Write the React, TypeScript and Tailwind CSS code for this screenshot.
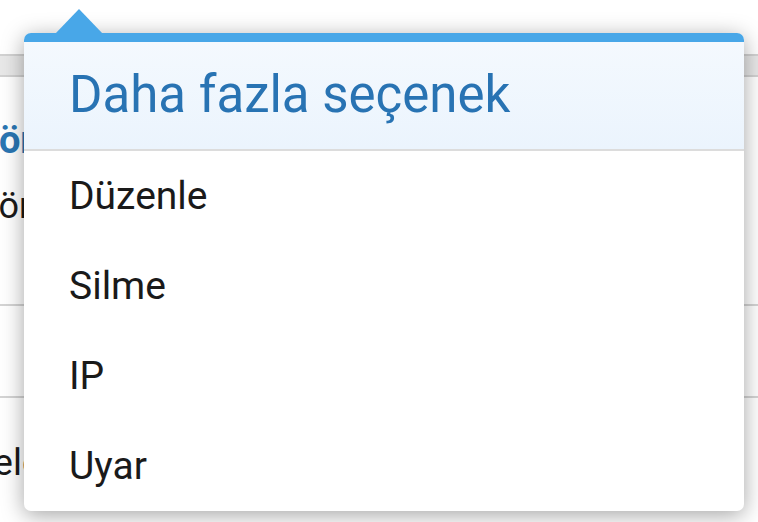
import React from "react";

const items = ["Düzenle", "Silme", "IP", "Uyar"];

export default function App() {
  return (
    <div
      className="relative w-[758px] h-[522px] overflow-hidden bg-white"
      style={{ fontFamily: "Roboto, 'Noto Sans', sans-serif" }}
    >
      {/* background page */}
      <div className="flex flex-col w-full">
        <div className="h-[54px]" />
        <div className="h-[23px] bg-[#e8e8e8] border-y-2 border-[#d2d2d2]" />
        <div className="h-[227px] flex flex-col pt-[40px] gap-[21px] overflow-hidden">
          <div className="ml-[-27px] text-[38px] leading-[46px] font-bold text-[#2a76b3] whitespace-nowrap">
            Görev
          </div>
          <div className="ml-[-22px] text-[36px] leading-[44px] text-[#1a1a1a] whitespace-nowrap">
            Yönetici
          </div>
        </div>
        <div className="h-[94px] border-y-2 border-[#d4d4d4]" />
        <div className="pt-[43px]">
          <div className="ml-[-27px] text-[37px] leading-[44px] text-[#1a1a1a] whitespace-nowrap">
            Telco
          </div>
        </div>
      </div>

      {/* popover */}
      <div className="absolute left-[24px] top-[33px] w-[720px] h-[478px] rounded-[7px] bg-white shadow-[0_4px_22px_rgba(0,0,0,0.36)] flex flex-col">
        <svg
          className="absolute left-[31px] top-[-24px]"
          width="48"
          height="25"
          viewBox="0 0 48 25"
        >
          <polygon points="0,25 24,0 48,25" fill="#48a7e8" />
        </svg>
        <div className="h-[9px] bg-[#48a7e8] rounded-t-[7px]" />
        <div className="h-[107px] flex items-center pl-[45px] pb-[2px] bg-gradient-to-b from-[#f4f9fe] to-[#ebf4fd]">
          <span className="text-[51px] leading-none text-[#2873b3] whitespace-nowrap">
            Daha fazla seçenek
          </span>
        </div>
        <div className="h-[2px] bg-[#dcdcdc]" />
        <div className="flex flex-col">
          {items.map((t) => (
            <div
              key={t}
              className="h-[90px] flex items-center pl-[45px] text-[39px] leading-none text-[#1a1a1a]"
            >
              {t}
            </div>
          ))}
        </div>
      </div>
    </div>
  );
}
